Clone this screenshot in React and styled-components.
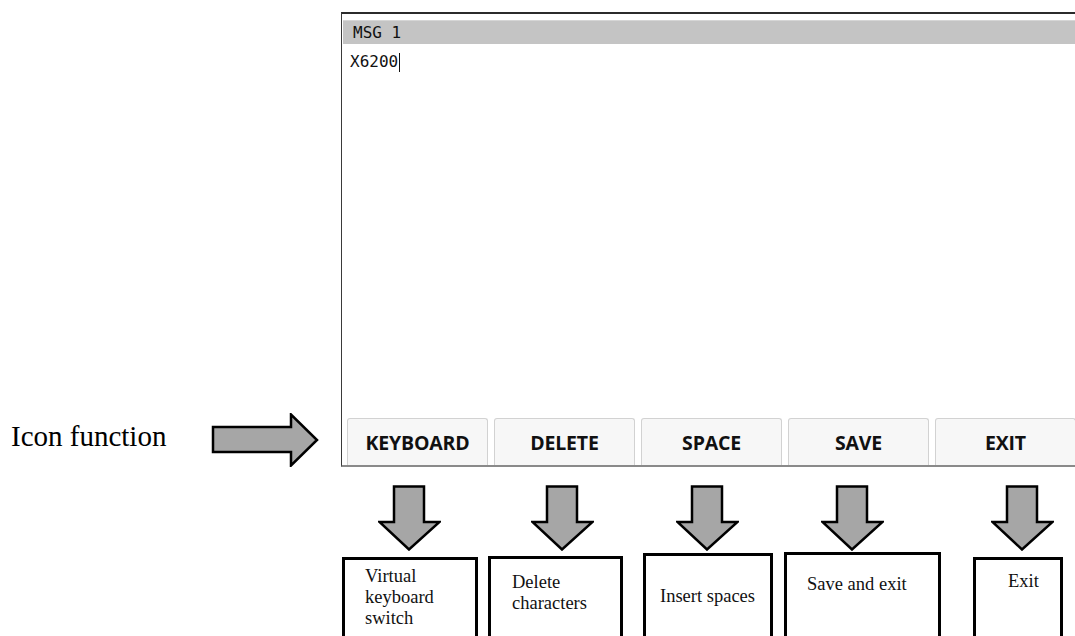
import styled, { createGlobalStyle } from "styled-components";

const GlobalStyle = createGlobalStyle`
  html, body {
    margin: 0;
    padding: 0;
    background: #fff;
    overflow: hidden;
  }
`;

const Page = styled.div`
  width: 1075px;
  height: 636px;
  overflow: hidden;
  font-family: "Liberation Serif", "Times New Roman", serif;
  color: #000;
`;

const Top = styled.div`
  display: grid;
  grid-template-columns: 341px 1fr;
  height: 463px;
`;

const Pointer = styled.div`
  display: flex;
  align-items: center;
  margin-top: 413px;
  height: 54px;
  padding-left: 11px;
`;

const Label = styled.span`
  font-size: 29px;
  line-height: 1;
  margin-right: 45px;
  margin-top: -7px;
`;

const Screen = styled.div`
  display: flex;
  flex-direction: column;
  margin-top: 12px;
  width: calc(100% + 30px);
  border-top: 2px solid #2b2b2b;
  border-left: 1px solid #3a3a3a;
  border-bottom: 2px solid #8a8a8a;
  padding-top: 6px;
  font-family: "DejaVu Sans Mono", "Liberation Mono", monospace;
  font-size: 16px;
  color: #111;
`;

const Header = styled.div`
  height: 24px;
  line-height: 24px;
  margin-left: 1px;
  padding-left: 10px;
  background: #c4c4c4;
  border-top: 1px solid #d6d6d6;
  box-sizing: border-box;
`;

const EditLine = styled.div`
  margin-top: 8px;
  padding-left: 8px;
  line-height: 20px;
  display: flex;
  align-items: center;
`;

const Caret = styled.span`
  display: inline-block;
  width: 1px;
  height: 19px;
  background: #111;
  margin-left: 1px;
`;

const Softkeys = styled.div`
  margin-top: auto;
  display: flex;
  gap: 6px;
  padding-left: 5px;
`;

const Softkey = styled.div`
  flex: 0 0 141px;
  height: 47px;
  box-sizing: border-box;
  display: flex;
  align-items: center;
  justify-content: center;
  background: #f7f7f7;
  border: 1px solid #d2d2d2;
  border-bottom: none;
  border-radius: 3px 3px 0 0;
  font-family: "Open Sans", "Noto Sans", sans-serif;
  font-weight: 700;
  font-size: 19.5px;
  letter-spacing: -0.2px;
  color: #111;
`;

const Callouts = styled.div`
  display: flex;
  align-items: flex-start;
  padding-top: 22px;
`;

const Callout = styled.div`
  display: flex;
  flex-direction: column;
  align-items: flex-start;
  flex: 0 0 ${(p) => p.$width}px;
  margin-left: ${(p) => p.$left}px;
`;

const DownArrow = styled.svg`
  display: block;
  margin-left: ${(p) => p.$x}px;
`;

const Box = styled.div`
  box-sizing: border-box;
  width: 100%;
  height: 110px;
  margin-top: ${(p) => p.$top}px;
  border: 3px solid #000;
  padding: ${(p) => p.$padTop}px 4px 0 ${(p) => p.$padLeft}px;
  font-size: 18.5px;
  line-height: 21px;
  color: #111;
`;

const keys = ["KEYBOARD", "DELETE", "SPACE", "SAVE", "EXIT"];

const notes = [
  { left: 342, width: 136, arrowX: 36, top: 6, padTop: 6, padLeft: 20, lines: ["Virtual", "keyboard", "switch"] },
  { left: 10, width: 135, arrowX: 43, top: 5, padTop: 13, padLeft: 21, lines: ["Delete", "characters"] },
  { left: 20, width: 130, arrowX: 33, top: 2, padTop: 30, padLeft: 14, lines: ["Insert spaces"] },
  { left: 11, width: 157, arrowX: 37, top: 1, padTop: 19, padLeft: 20, lines: ["Save and exit"] },
  { left: 32, width: 90, arrowX: 18, top: 6, padTop: 11, padLeft: 32, lines: ["Exit"] },
];

const RightArrow = () => (
  <svg width="109" height="54" viewBox="0 0 109 54">
    <polygon
      points="2,14 80,14 80,1.5 106,27 80,52.5 80,39 2,39"
      fill="#a6a6a6"
      stroke="#000"
      strokeWidth="2.5"
      strokeLinejoin="miter"
    />
  </svg>
);

const App = () => {
  return (
    <Page>
      <GlobalStyle />
      <Top>
        <Pointer>
          <Label>Icon function</Label>
          <RightArrow />
        </Pointer>
        <Screen>
          <Header>MSG 1</Header>
          <EditLine>
            X6200
            <Caret />
          </EditLine>
          <Softkeys>
            {keys.map((k) => (
              <Softkey key={k}>{k}</Softkey>
            ))}
          </Softkeys>
        </Screen>
      </Top>
      <Callouts>
        {notes.map((n, i) => (
          <Callout key={i} $left={n.left} $width={n.width}>
            <DownArrow $x={n.arrowX} width="63" height="66" viewBox="0 0 63 66">
              <polygon
                points="16,1.5 46,1.5 46,37 61.5,37 31,64.5 1.5,37 16,37"
                fill="#a6a6a6"
                stroke="#000"
                strokeWidth="2.5"
              />
            </DownArrow>
            <Box $top={n.top} $padTop={n.padTop} $padLeft={n.padLeft}>
              {n.lines.map((l) => (
                <div key={l}>{l}</div>
              ))}
            </Box>
          </Callout>
        ))}
      </Callouts>
    </Page>
  );
};

export default App;
